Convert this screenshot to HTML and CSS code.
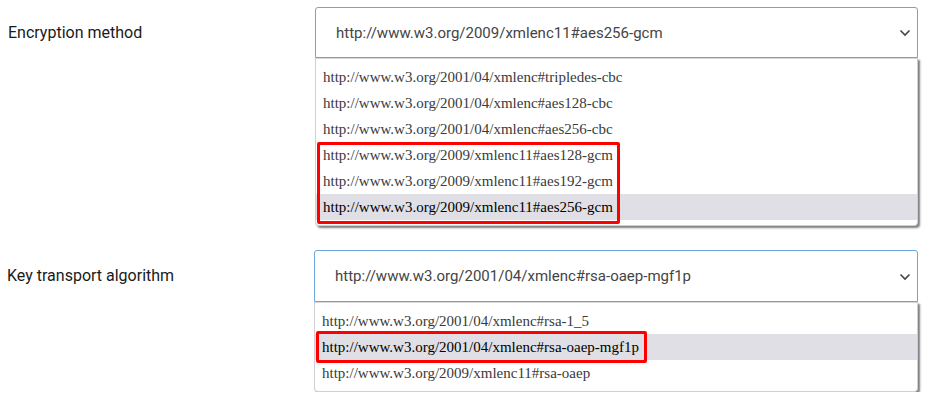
FILE: index.html
```html
<!DOCTYPE html>
<html>
<head>
<meta charset="utf-8">
<link rel="stylesheet" href="styles.css">
</head>
<body>
<div class="form">
  <div class="row first">
    <div class="label">Encryption method</div>
    <div class="field">
      <div class="select">
        <span class="value">http://www.w3.org/2009/xmlenc11#aes256-gcm</span>
        <svg class="chev" width="12" height="8" viewBox="0 0 12 8"><path d="M1.5 1.5 L6 6 L10.5 1.5" fill="none" stroke="#444" stroke-width="1.6"/></svg>
      </div>
      <div class="list">
        <div class="opt">http://www.w3.org/2001/04/xmlenc#tripledes-cbc</div>
        <div class="opt">http://www.w3.org/2001/04/xmlenc#aes128-cbc</div>
        <div class="opt">http://www.w3.org/2001/04/xmlenc#aes256-cbc</div>
        <div class="opt">http://www.w3.org/2009/xmlenc11#aes128-gcm</div>
        <div class="opt">http://www.w3.org/2009/xmlenc11#aes192-gcm</div>
        <div class="opt sel">http://www.w3.org/2009/xmlenc11#aes256-gcm</div>
        <div class="mark mark1"></div>
      </div>
    </div>
  </div>
  <div class="row second">
    <div class="label">Key transport algorithm</div>
    <div class="field">
      <div class="select">
        <span class="value">http://www.w3.org/2001/04/xmlenc#rsa-oaep-mgf1p</span>
        <svg class="chev" width="12" height="8" viewBox="0 0 12 8"><path d="M1.5 1.5 L6 6 L10.5 1.5" fill="none" stroke="#444" stroke-width="1.6"/></svg>
      </div>
      <div class="list">
        <div class="opt">http://www.w3.org/2001/04/xmlenc#rsa-1_5</div>
        <div class="opt sel">http://www.w3.org/2001/04/xmlenc#rsa-oaep-mgf1p</div>
        <div class="opt">http://www.w3.org/2009/xmlenc11#rsa-oaep</div>
        <div class="mark mark2"></div>
      </div>
    </div>
  </div>
</div>
</body>
</html>
```

FILE: styles.css
```css
html, body {
  margin: 0;
  padding: 0;
  background: #ffffff;
}
.form {
  width: 928px;
  padding-top: 7px;
}
.row {
  display: grid;
  grid-template-columns: 315px 603px;
  align-items: start;
}
.row.second {
  margin-top: 24px;
}
.row.second .field {
  margin-left: -1px;
}
.label {
  font-family: Roboto, "Liberation Sans", sans-serif;
  font-size: 16px;
  color: #1a1a1a;
  padding-left: 8px;
  height: 51px;
  display: flex;
  align-items: center;
}
.row.second .label {
  padding-left: 7px;
}
.field {
  display: flex;
  flex-direction: column;
}
.select {
  box-sizing: border-box;
  height: 51px;
  border: 1px solid #6aa6de;
  border-radius: 3px 3px 0 0;
  display: flex;
  align-items: center;
  justify-content: space-between;
  padding: 0 6px 0 20px;
  font-family: Roboto, "Liberation Sans", sans-serif;
  font-size: 15px;
  color: #444;
}
.row.second .select {
  height: 52px;
}
.chev {
  display: block;
  margin-top: 1px;
}
.list {
  position: relative;
  border: 1px solid #cfcfd4;
  border-top: 1px solid #d8d8dc;
  border-radius: 0 0 4px 4px;
  padding: 5px 0;
  box-shadow: 2px 2px 2px rgba(0, 0, 0, 0.5);
  background: #fff;
}
.opt {
  height: 26px;
  line-height: 26px;
  padding-left: 7px;
  font-family: "Liberation Serif", "Times New Roman", serif;
  font-size: 15px;
  color: #3a3a3a;
  white-space: nowrap;
}
.opt.sel {
  background: #dfdfe5;
  color: #000;
}
.mark {
  position: absolute;
  box-sizing: border-box;
  border: 3px solid #ff0000;
  border-radius: 2px;
}
.mark1 {
  left: 1px;
  top: 83px;
  width: 303px;
  height: 82px;
}
.mark2 {
  left: 1px;
  top: 28px;
  width: 331px;
  height: 32px;
}
```
